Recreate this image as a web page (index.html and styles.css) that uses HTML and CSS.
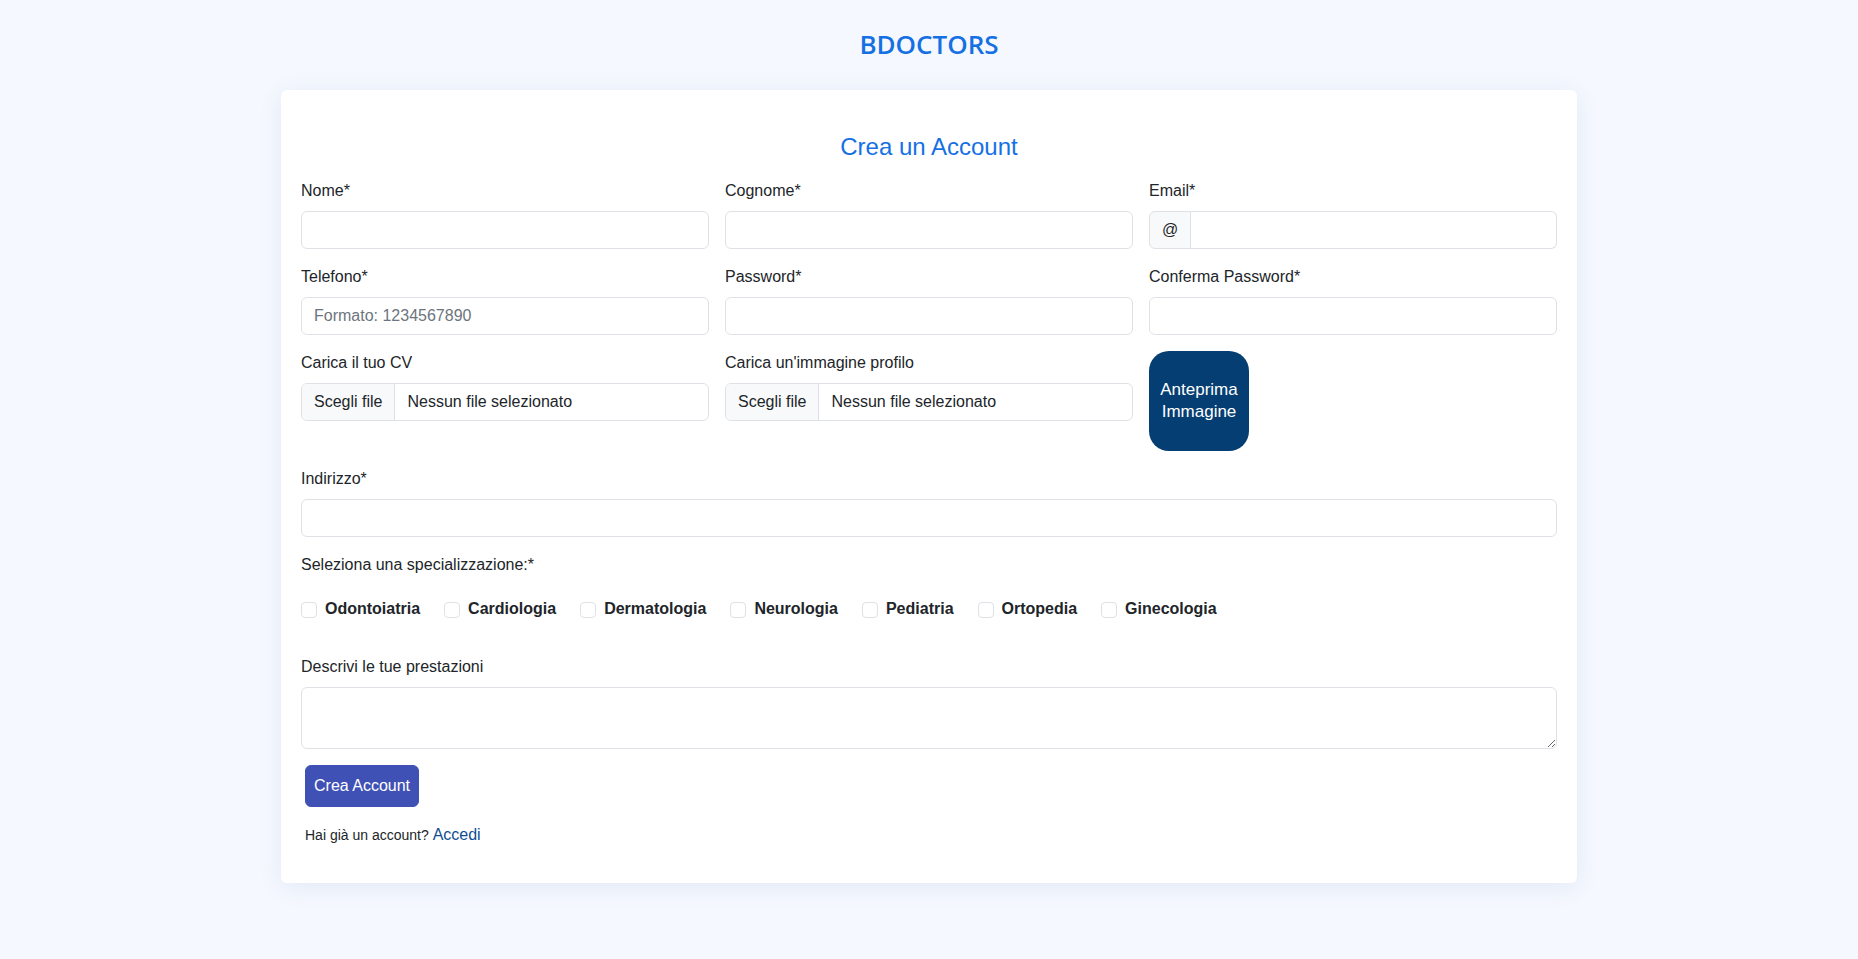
FILE: index.html
```html
<!DOCTYPE html>
<html lang="it">
<head>
<meta charset="utf-8">
<title>BDoctors - Registrazione</title>
<link rel="stylesheet" href="styles.css">
</head>
<body>
  <header class="site-header">
    <h1 class="brand">BDOCTORS</h1>
  </header>

  <main class="card">
    <h2 class="card-title">Crea un Account</h2>
    <form class="form">
      <div class="grid">
        <div class="field">
          <label class="label">Nome*</label>
          <input class="input" type="text">
        </div>
        <div class="field">
          <label class="label">Cognome*</label>
          <input class="input" type="text">
        </div>
        <div class="field">
          <label class="label">Email*</label>
          <div class="input-group">
            <span class="addon">@</span>
            <input class="input input-grouped" type="text">
          </div>
        </div>

        <div class="field">
          <label class="label">Telefono*</label>
          <input class="input" type="text" placeholder="Formato: 1234567890">
        </div>
        <div class="field">
          <label class="label">Password*</label>
          <input class="input" type="password">
        </div>
        <div class="field">
          <label class="label">Conferma Password*</label>
          <input class="input" type="password">
        </div>

        <div class="field">
          <label class="label">Carica il tuo CV</label>
          <div class="file">
            <span class="file-btn">Scegli file</span>
            <span class="file-name">Nessun file selezionato</span>
          </div>
        </div>
        <div class="field">
          <label class="label">Carica un'immagine profilo</label>
          <div class="file">
            <span class="file-btn">Scegli file</span>
            <span class="file-name">Nessun file selezionato</span>
          </div>
        </div>
        <div class="field">
          <div class="preview">Anteprima<br>Immagine</div>
        </div>
      </div>

      <div class="field">
        <label class="label">Indirizzo*</label>
        <input class="input" type="text">
      </div>

      <div class="label label-plain">Seleziona una specializzazione:*</div>
      <div class="checks">
        <label class="check"><input type="checkbox" class="box"><span>Odontoiatria</span></label>
        <label class="check"><input type="checkbox" class="box"><span>Cardiologia</span></label>
        <label class="check"><input type="checkbox" class="box"><span>Dermatologia</span></label>
        <label class="check"><input type="checkbox" class="box"><span>Neurologia</span></label>
        <label class="check"><input type="checkbox" class="box"><span>Pediatria</span></label>
        <label class="check"><input type="checkbox" class="box"><span>Ortopedia</span></label>
        <label class="check"><input type="checkbox" class="box"><span>Ginecologia</span></label>
      </div>

      <div class="field">
        <label class="label">Descrivi le tue prestazioni</label>
        <textarea class="input textarea" rows="2"></textarea>
      </div>

      <button type="button" class="btn">Crea Account</button>
      <p class="login">Hai già un account? <a href="#" class="link">Accedi</a></p>
    </form>
  </main>
</body>
</html>
```

FILE: styles.css
```css
* {
  box-sizing: border-box;
}

body {
  margin: 0;
  background: #f5f8fe;
  font-family: "Liberation Sans", Arial, sans-serif;
  font-size: 16px;
  line-height: 24px;
  color: #212529;
}

.site-header {
  padding-top: 28px;
}

.brand {
  margin: 0;
  text-align: center;
  font-family: "Open Sans", "Liberation Sans", sans-serif;
  font-weight: 600;
  font-size: 26px;
  line-height: 32px;
  color: #1570e4;
}

.card {
  width: 1296px;
  margin: 30px auto 60px;
  background: #ffffff;
  border-radius: 6px;
  padding: 20px 20px 20px;
  box-shadow: 0 4px 24px rgba(40, 80, 170, 0.09);
}

.card-title {
  margin: 22px 0 18px;
  text-align: center;
  font-weight: 400;
  font-size: 24px;
  line-height: 29px;
  color: #1570e4;
}

.grid {
  display: grid;
  grid-template-columns: repeat(3, 1fr);
  column-gap: 16px;
  align-items: start;
}

.field {
  margin-bottom: 16px;
}

.label {
  display: block;
  margin-bottom: 8px;
  font-size: 16px;
  line-height: 24px;
}

.label-plain {
  margin-bottom: 0;
}

.input {
  display: block;
  width: 100%;
  height: 38px;
  padding: 6px 12px;
  font-family: "Liberation Sans", Arial, sans-serif;
  font-size: 16px;
  line-height: 24px;
  color: #212529;
  background: #ffffff;
  border: 1px solid #dee2e6;
  border-radius: 6px;
  outline: none;
}

.input::placeholder {
  color: #6c757d;
}

.input-group {
  display: flex;
}

.addon {
  display: flex;
  align-items: center;
  padding: 0 12px;
  height: 38px;
  background: #f8f9fa;
  border: 1px solid #dee2e6;
  border-radius: 6px 0 0 6px;
}

.input-grouped {
  flex: 1;
  border-left: none;
  border-radius: 0 6px 6px 0;
}

.file {
  display: flex;
  height: 38px;
  border: 1px solid #dee2e6;
  border-radius: 6px;
  overflow: hidden;
}

.file-btn {
  display: flex;
  align-items: center;
  padding: 0 12px;
  background: #f8f9fa;
  border-right: 1px solid #dee2e6;
}

.file-name {
  display: flex;
  align-items: center;
  padding: 0 12px;
}

.preview {
  width: 100px;
  height: 100px;
  display: flex;
  align-items: center;
  justify-content: center;
  text-align: center;
  background: #043e72;
  color: #ffffff;
  border-radius: 20px;
  font-size: 17px;
  line-height: 22px;
}

.checks {
  display: flex;
  gap: 24px;
  margin-top: 20px;
  margin-bottom: 34px;
}

.check {
  display: flex;
  align-items: center;
  gap: 8px;
  font-weight: 700;
  line-height: 24px;
}

.box {
  appearance: none;
  -webkit-appearance: none;
  width: 16px;
  height: 16px;
  margin: 2px 0 0;
  border: 1px solid #dee2e6;
  border-radius: 4px;
  background: #ffffff;
}

.textarea {
  height: 62px;
  resize: vertical;
}

.btn {
  display: block;
  margin: 0 0 0 4px;
  padding: 8px 8px;
  font-family: "Liberation Sans", Arial, sans-serif;
  font-size: 16px;
  line-height: 24px;
  color: #ffffff;
  background: #3f51b5;
  border: 1px solid #3f51b5;
  border-radius: 6px;
}

.login {
  margin: 16px 0 16px 4px;
  font-size: 14px;
  line-height: 24px;
}

.link {
  font-size: 16px;
  color: #0e4d92;
  text-decoration: none;
}
```
